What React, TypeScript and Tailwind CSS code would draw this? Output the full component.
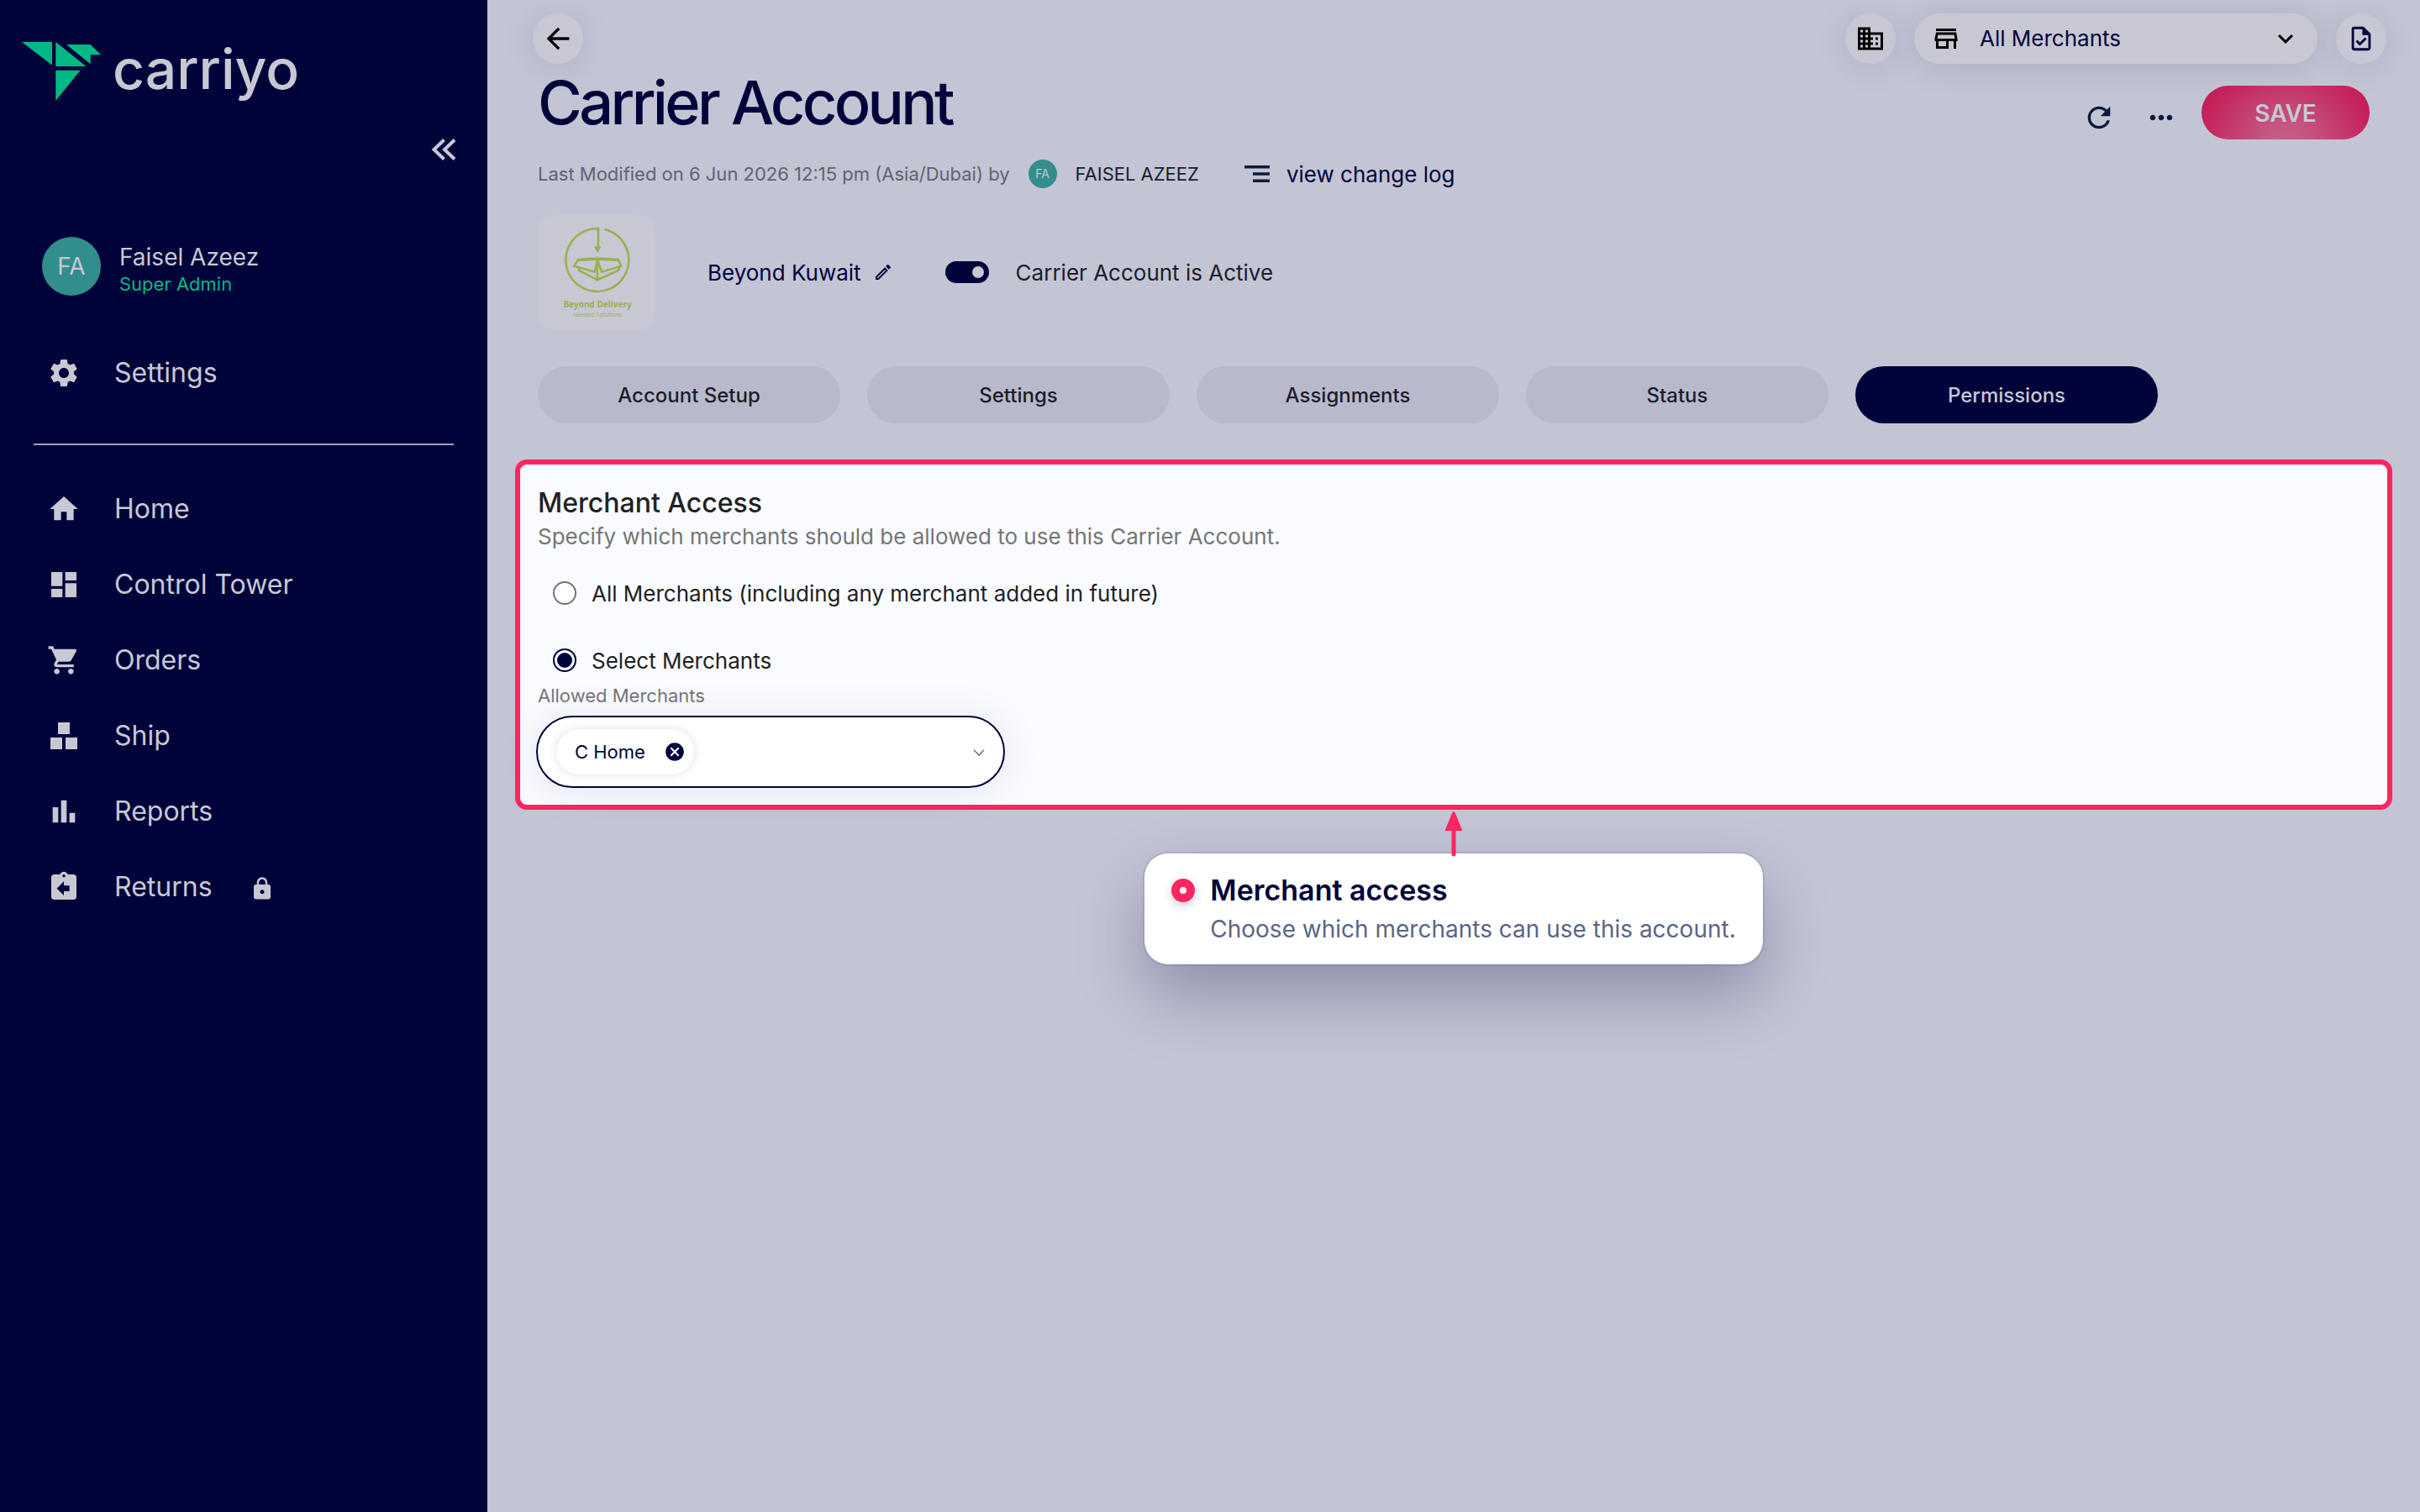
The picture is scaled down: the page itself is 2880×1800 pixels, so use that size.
import React, { useState } from "react";
import {
  MdArrowBack,
  MdAssignmentReturn,
  MdBarChart,
  MdBusiness,
  MdCancel,
  MdDashboard,
  MdHome,
  MdKeyboardArrowDown,
  MdLock,
  MdMoreHoriz,
  MdOutlineEdit,
  MdOutlineStore,
  MdOutlineTask,
  MdRefresh,
  MdSettings,
  MdShoppingCart,
} from "react-icons/md";

const ShipIcon = ({ className }: { className?: string }) => (
  <svg viewBox="0 0 40 40" fill="currentColor" className={className}>
    <path d="M13 4h14v14H13zM4 22h14v14H4zM22 22h14v14H22z" />
  </svg>
);

const navItems = [
  { label: "Home", icon: MdHome },
  { label: "Control Tower", icon: MdDashboard },
  { label: "Orders", icon: MdShoppingCart },
  { label: "Ship", icon: ShipIcon },
  { label: "Reports", icon: MdBarChart },
  { label: "Returns", icon: MdAssignmentReturn, locked: true },
];

const tabs = ["Account Setup", "Settings", "Assignments", "Status", "Permissions"];

const Logo = () => (
  <a href="#" className="flex items-start gap-[14px] pl-[26px]">
    <svg viewBox="0 0 94 70" className="h-[70px] w-[94px]" fill="#00b985">
      <path d="M0 0H36V27.5Z" />
      <path d="M40.3 0 76.5 29H40.3Z" />
      <path d="M53 3H81.7L94 15.2H81.7V26.3Z" />
      <path d="M40.3 33.7H69.5L40.3 70Z" />
    </svg>
    <span className="text-[66px] leading-16 font-medium text-[#c7c8d4]">carriyo</span>
  </a>
);

const BrandLogo = () => (
  <svg viewBox="0 0 140 140" className="h-[140px] w-[140px] rounded-3xl bg-[#c7c8d4]">
    <g fill="none" stroke="#9bb04e" strokeWidth="2.6">
      <path d="M79.5 19A37.5 37.5 0 1 1 72 18V41" />
      <path d="M71 53.5 48.3 55 43 62.7 67.7 69.7 71 55 76 69.7 99.3 62.7 96 55 71 53.5Z" />
      <path d="M49 64.5V68L71 79.3 96.7 67.5V64M71 55V79" />
      <path d="M49 56 71 54.5 95 56" />
    </g>
    <path d="M67 39.5H75.5L71.2 47Z" fill="#9bb04e" />
    <text x="71" y="112" textAnchor="middle" className="font-['Open_Sans'] text-[10px] font-bold" fill="#9bb04e">
      Beyond Delivery
    </text>
    <text x="71" y="123" textAnchor="middle" className="font-['Open_Sans'] text-[7px]" fill="#9bb04e">
      Needed Solutions
    </text>
  </svg>
);

const Sidebar = () => (
  <aside className="w-[580px] shrink-0 bg-[#00033a] pt-[50px] text-[#c7c8d4]">
    <Logo />
    <div className="mt-9 flex justify-end pr-8">
      <button aria-label="Collapse menu">
        <svg viewBox="0 0 40 44" className="h-11 w-10" fill="none" stroke="currentColor" strokeWidth="4">
          <path d="M20.5 10.5 8.5 22 20.5 33.5M33 10.5 21 22 33 33.5" />
        </svg>
      </button>
    </div>

    <div className="mt-[82px] flex items-center gap-[22px] pl-[50px]">
      <div className="flex size-[70px] items-center justify-center rounded-full bg-[#328d8d] text-[28px]">
        FA
      </div>
      <div className="pt-[6px]">
        <p className="text-[28px] leading-9">Faisel Azeez</p>
        <p className="text-[22px] leading-7 text-[#00b985]">Super Admin</p>
      </div>
    </div>

    <nav>
      <a href="#" className="mt-[47px] flex h-[90px] items-center gap-10 pl-14 text-[32px]">
        <MdSettings className="size-10" />
        Settings
      </a>
      <hr className="mx-10 mt-[39px] mb-[31px] border-t-2 border-[#a0a1b4]" />
      {navItems.map(({ label, icon: Icon, locked }) => (
        <a key={label} href="#" className="flex h-[90px] items-center gap-10 pl-14 text-[32px]">
          <Icon className="size-10" />
          {label}
          {locked && <MdLock className="mt-1 ml-1 size-[30px]" />}
        </a>
      ))}
    </nav>
  </aside>
);

const TopBar = () => (
  <header className="flex items-center justify-between pt-4 pr-[7px] pl-[21px]">
    <button
      aria-label="Back"
      className="flex size-[60px] items-center justify-center rounded-full bg-[#c7c8d4] text-black shadow-[0_4px_40px_rgba(0,3,58,0.1)]"
    >
      <MdArrowBack className="size-10" />
    </button>
    <div className="flex items-center gap-[22px]">
      <button
        aria-label="Organization"
        className="flex size-[60px] items-center justify-center rounded-full bg-[#c7c8d4] text-black shadow-[0_4px_40px_rgba(0,3,58,0.1)]"
      >
        <MdBusiness className="size-9" />
      </button>
      <div className="relative h-[60px] w-[480px] rounded-full bg-[#c7c8d4] shadow-[0_4px_40px_rgba(0,3,58,0.12)]">
        <MdOutlineStore className="pointer-events-none absolute top-3 left-5 size-9 text-black" />
        <select
          aria-label="Merchant"
          className="h-full w-full appearance-none rounded-full pb-[2px] pl-[78px] text-[26px] text-[#00033a]"
        >
          <option>All Merchants</option>
        </select>
        <MdKeyboardArrowDown className="pointer-events-none absolute top-3 right-5 size-9 text-black" />
      </div>
      <button
        aria-label="Tasks"
        className="flex size-[60px] items-center justify-center rounded-full bg-[#c7c8d4] text-[#00033a] shadow-[0_4px_40px_rgba(0,3,58,0.1)]"
      >
        <MdOutlineTask className="size-[34px]" />
      </button>
    </div>
  </header>
);

const AccountHeader = () => {
  const [active, setActive] = useState(true);
  const [tab, setTab] = useState("Permissions");

  return (
    <div className="px-[27px]">
      <div className="mt-[2px] flex items-end justify-between">
        <h1 className="text-[72px] leading-[88px] font-medium tracking-tighter text-[#00033a]">
          Carrier Account
        </h1>
        <div className="flex items-center text-[#0a1a3c]">
          <button aria-label="Refresh" className="pt-3">
            <MdRefresh className="size-10" />
          </button>
          <button aria-label="More" className="mr-7 ml-[34px] pt-3">
            <MdMoreHoriz className="size-10" />
          </button>
          <button className="h-16 w-[200px] rounded-full bg-[radial-gradient(circle_at_50%_120%,#c5628b_0%,#c55582_25%,#c52059_85%)] pt-[2px] text-[28px] font-semibold text-[#c7c8d4]">
            SAVE
          </button>
        </div>
      </div>

      <div className="mt-6 flex h-[34px] items-center text-[22px]">
        <span className="text-[#62636f]">Last Modified on 6 Jun 2026 12:15 pm (Asia/Dubai) by</span>
        <span className="ml-[22px] flex size-[34px] items-center justify-center rounded-full bg-[#328d8d] text-sm text-[#c7c8d4]">
          FA
        </span>
        <span className="ml-[22px] text-[#1c1d2a]">FAISEL AZEEZ</span>
        <a href="#" className="ml-[54px] flex items-center gap-5 text-[26px] text-[#00033a]">
          <svg viewBox="0 0 30 20" className="h-5 w-[30px]" fill="#0a1a3c">
            <path d="M0 0H30V3.4H0zM10 8.3H30V11.7H10zM10 16.6H30V20H10z" />
          </svg>
          view change log
        </a>
      </div>

      <div className="mt-[30px] flex items-center text-[26px]">
        <BrandLogo />
        <span className="ml-[62px] text-[#00033a]">Beyond Kuwait</span>
        <button aria-label="Edit name" className="ml-[14px] text-[#00033a]">
          <MdOutlineEdit className="size-6" />
        </button>
        <label className="ml-[62px] flex items-center gap-8 text-[#1c1d2a]">
          <input
            type="checkbox"
            role="switch"
            checked={active}
            onChange={(e) => setActive(e.target.checked)}
            className="flex h-[26px] w-[52px] appearance-none items-center rounded-full bg-[#8a8ba0] px-[6px] before:size-[14px] before:rounded-full before:bg-[#c7c8d4] checked:justify-end checked:bg-[#00033a]"
          />
          Carrier Account is Active
        </label>
      </div>

      <div role="tablist" className="mt-[42px] flex max-w-[1928px] gap-8">
        {tabs.map((name) => (
          <button
            key={name}
            role="tab"
            aria-selected={name === tab}
            onClick={() => setTab(name)}
            className={`h-[68px] flex-1 rounded-full pt-[2px] text-2xl font-medium ${
              name === tab ? "bg-[#00033a] text-[#c7c8d4]" : "bg-[#b9b9cc] text-[#1c1d2a]"
            }`}
          >
            {name}
          </button>
        ))}
      </div>
    </div>
  );
};

const MerchantAccess = () => {
  const [access, setAccess] = useState("select");
  const [merchants, setMerchants] = useState(["C Home"]);

  const options = [
    { value: "all", label: "All Merchants (including any merchant added in future)" },
    { value: "select", label: "Select Merchants" },
  ];

  return (
    <section className="mt-[43px] rounded-[14px] border-6 border-[#fe2560] bg-[#fafbff] px-[21px] pt-[26px] pb-5 text-[#212121]">
      <h2 className="text-[32px] leading-10 font-medium">Merchant Access</h2>
      <p className="text-[26px] leading-10 text-[#757575]">
        Specify which merchants should be allowed to use this Carrier Account.
      </p>

      <div className="mt-[19px] flex flex-col items-start gap-6 pl-[18px]">
        {options.map((option) => (
          <label key={option.value} className="flex h-14 items-center gap-[18px] text-[26px]">
            <input
              type="radio"
              name="access"
              checked={access === option.value}
              onChange={() => setAccess(option.value)}
              className="flex size-7 appearance-none items-center justify-center rounded-full border-2 border-[#757575] bg-white before:size-[18px] before:rounded-full checked:border-[#00033a] checked:before:bg-[#00033a]"
            />
            {option.label}
          </label>
        ))}
      </div>

      <label htmlFor="allowed" className="block text-[22px] leading-7 text-[#757575]">
        Allowed Merchants
      </label>
      <div className="mt-[10px] -ml-[2px] flex h-[86px] w-[558px] items-center rounded-full border-2 border-[#00033a] bg-white pl-[22px] shadow-[0_4px_50px_rgba(0,3,58,0.09)]">
        {merchants.map((name) => (
          <span
            key={name}
            className="flex h-[54px] items-center gap-[22px] rounded-full bg-white pr-[10px] pl-[22px] text-[22px] whitespace-nowrap text-[#00033a] shadow-[0_0_12px_rgba(0,0,0,0.12)]"
          >
            {name}
            <button
              aria-label={`Remove ${name}`}
              onClick={() => setMerchants(merchants.filter((m) => m !== name))}
            >
              <MdCancel className="size-[26px]" />
            </button>
          </span>
        ))}
        <div className="relative h-full flex-1">
          <select id="allowed" className="h-full w-full appearance-none rounded-full">
            <option></option>
          </select>
          <svg
            viewBox="0 0 14 8"
            className="pointer-events-none absolute top-[38px] right-[22px] h-2 w-[14px]"
            fill="none"
            stroke="#757575"
            strokeWidth="1.6"
          >
            <path d="M1 0.8 7 7 13 0.8" />
          </svg>
        </div>
      </div>
    </section>
  );
};

const Callout = () => (
  <div className="mt-[2px] flex flex-col items-center">
    <svg viewBox="0 0 22 54" className="z-10 -mb-1 h-[54px] w-[22px]" fill="#fe2560">
      <path d="M9.3 1.5Q11-1 12.7 1.5L21.5 23H13.5V51Q13.5 53.5 11 53.5T8.5 51V23H.5Z" />
    </svg>
    <div className="flex gap-[18px] rounded-[28px] bg-white px-8 pt-[22px] pb-5 shadow-[0_0_0_2px_rgba(0,3,58,0.08),0_36px_80px_rgba(0,3,58,0.28)]">
      <span className="mt-2 size-7 rounded-full border-10 border-[#fe2560] bg-white shadow-[0_4px_12px_rgba(0,3,58,0.2)]" />
      <div>
        <p className="text-[34px] leading-11 font-semibold text-[#00033a]">Merchant access</p>
        <p className="mt-[2px] text-[28px] leading-11 text-[#5b6584]">
          Choose which merchants can use this account.
        </p>
      </div>
    </div>
  </div>
);

const App = () => {
  return (
    <div className="flex min-h-screen bg-[#c3c4d4] font-[Inter,sans-serif]">
      <Sidebar />
      <main className="min-w-0 flex-1 px-[33px]">
        <TopBar />
        <AccountHeader />
        <MerchantAccess />
        <Callout />
      </main>
    </div>
  );
};

export default App;
